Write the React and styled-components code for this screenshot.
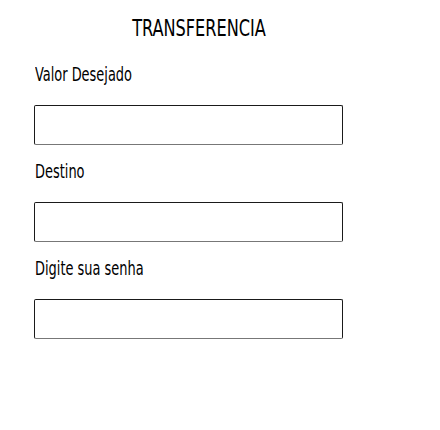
import React from 'react'
import styled, { createGlobalStyle } from 'styled-components'

const GlobalStyle = createGlobalStyle`
    body {
        margin: 0;
        background: #ffffff;
        font-family: "Liberation Sans Narrow", "DejaVu Sans Condensed", "Liberation Sans", sans-serif;
        color: #000;
    }
`;

const Page = styled.div`
    width: 398px;
    padding-top: 14px;
`;

const Title = styled.h1`
    margin: 0;
    text-align: center;
    font-size: 23px;
    font-weight: 400;
    line-height: 28px;
    transform: scaleX(0.78);
`;

const Form = styled.form`
    display: flex;
    flex-direction: column;
    padding-left: 34px;
    margin-top: 21px;
`;

const Field = styled.div`
    display: flex;
    flex-direction: column;
    align-items: flex-start;
    gap: 20px;
    margin-bottom: 15px;
`;

const Label = styled.label`
    display: inline-block;
    margin-left: 1px;
    font-size: 20px;
    line-height: 22px;
    transform: scaleX(0.72);
    transform-origin: left center;
    white-space: nowrap;
`;

const Input = styled.input`
    box-sizing: border-box;
    width: 309px;
    height: 40px;
    border: 1px solid #1a1a1a;
    border-bottom-color: #777;
    border-radius: 2px;
    background: #fff;
    outline: none;
    padding: 0 6px;
`;

function App() {
    return (
        <Page>
            <GlobalStyle />
            <Title>TRANSFERENCIA</Title>
            <Form>
                <Field>
                    <Label>Valor Desejado</Label>
                    <Input type="text" />
                </Field>
                <Field>
                    <Label>Destino</Label>
                    <Input type="text" />
                </Field>
                <Field>
                    <Label>Digite sua senha</Label>
                    <Input type="password" />
                </Field>
            </Form>
        </Page>
    )
}
export default App
